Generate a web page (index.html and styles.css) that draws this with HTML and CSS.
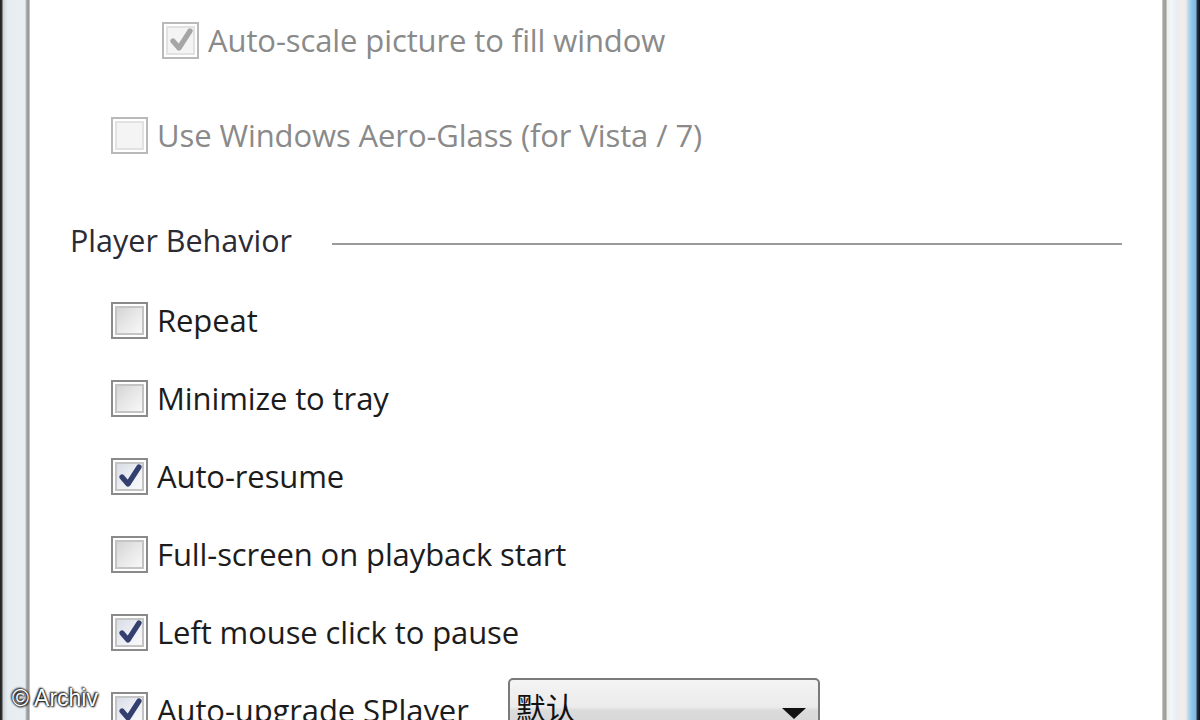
FILE: index.html
```html
<!DOCTYPE html>
<html lang="en">
<head>
  <meta charset="UTF-8">
  <title>SPlayer Options</title>
  <link rel="stylesheet" href="styles.css">
</head>
<body>
  <div id="window">
    <div class="frame-left"></div>
    <div id="panel">
      <div class="row sub disabled">
        <span class="check checked"><svg viewBox="0 0 14 14"><path d="M3 7.5 L6 11 L11.5 2.5"/></svg></span>
        <span class="label">Auto-scale picture to fill window</span>
      </div>
      <div class="row aero disabled">
        <span class="check"></span>
        <span class="label">Use Windows Aero-Glass (for Vista / 7)</span>
      </div>

      <div class="group">
        <span class="group-title">Player Behavior</span>
        <span class="group-line"></span>
      </div>

      <div class="row">
        <span class="check"></span>
        <span class="label">Repeat</span>
      </div>
      <div class="row">
        <span class="check"></span>
        <span class="label">Minimize to tray</span>
      </div>
      <div class="row">
        <span class="check checked"><svg viewBox="0 0 14 14"><path d="M3 7.5 L6 11 L11.5 2.5"/></svg></span>
        <span class="label">Auto-resume</span>
      </div>
      <div class="row">
        <span class="check"></span>
        <span class="label">Full-screen on playback start</span>
      </div>
      <div class="row">
        <span class="check checked"><svg viewBox="0 0 14 14"><path d="M3 7.5 L6 11 L11.5 2.5"/></svg></span>
        <span class="label">Left mouse click to pause</span>
      </div>
      <div class="row">
        <span class="check checked"><svg viewBox="0 0 14 14"><path d="M3 7.5 L6 11 L11.5 2.5"/></svg></span>
        <span class="label">Auto-upgrade SPlayer</span>
        <div class="combo">
          <span class="combo-text">默认</span>
          <span class="combo-arrow"></span>
        </div>
      </div>
    </div>
    <div class="frame-right"></div>
  </div>
  <div id="credit">© Archiv</div>
</body>
</html>
```

FILE: styles.css
```css
html,
body {
  margin: 0;
  padding: 0;
  width: 1200px;
  height: 720px;
  overflow: hidden;
  background-color: #fff;
}
body {
  font-family: "Open Sans", "Noto Sans CJK SC", sans-serif;
  position: relative;
}
#window {
  display: flex;
  height: 720px;
  overflow: hidden;
}
.frame-left {
  width: 30px;
  flex: none;
  background: linear-gradient(to right,
    #1c1c1c 0, #3a3a3a 2px, #c9d0d5 3px, #dfe5e9 6px, #e8edf1 8px,
    #e9eef2 25px, #bfc2c4 26px, #9c9c9c 27px, #9a9a9a 29px, #e6e6e6 30px);
}
.frame-right {
  width: 38px;
  flex: none;
  background: linear-gradient(to right,
    #e4e2dc 0, #a8a6a2 1px, #9b9b9b 4px, #eceeea 5px, #f4f6f8 9px,
    #e8eef4 14px, #f3ece9 20px, #f0ebea 24px, #b9daf0 26px, #8fc6ea 30px,
    #7fb8e0 34px, #2a3a48 35px, #0e0e0e 38px);
}
#panel {
  flex: 1;
  display: flex;
  flex-direction: column;
  padding-top: 1px;
  overflow: hidden;
}
.row {
  display: flex;
  align-items: center;
  height: 78px;
  flex: none;
  padding-left: 81px;
  color: #1c1c1c;
  font-size: 31px;
}
.row.sub {
  padding-left: 132px;
}
.row.aero {
  margin-top: 17px;
}
.row.disabled {
  color: #8a8a8a;
}
.label {
  margin-left: 9px;
  white-space: nowrap;
  letter-spacing: -0.1px;
}
.check {
  width: 37px;
  height: 37px;
  flex: none;
  box-sizing: border-box;
  border: 2px solid #8a8a8a;
  padding: 2px;
  background-color: #fff;
  position: relative;
}
.check::before {
  content: "";
  display: block;
  width: 100%;
  height: 100%;
  box-sizing: border-box;
  border: 2px solid #c4c4c4;
  background: linear-gradient(135deg, #d4d4d4 0%, #e6e6e6 45%, #f8f8f8 100%);
}
.check.checked::before {
  background: linear-gradient(135deg, #d8dce6 0%, #eceef4 50%, #fafafa 100%);
}
.check svg {
  position: absolute;
  left: 3px;
  top: 2px;
  width: 28px;
  height: 28px;
}
.check svg path {
  fill: none;
  stroke: #333f6e;
  stroke-width: 2.6;
  stroke-linecap: round;
  stroke-linejoin: round;
}
.disabled .check {
  border-color: #b9b9b9;
}
.disabled .check::before {
  border-color: #e2e2e2;
  background: #f4f4f4;
}
.disabled .check svg path {
  stroke: #a6a6a6;
}
.group {
  display: flex;
  align-items: center;
  height: 40px;
  margin-top: 46px;
  margin-bottom: 21px;
  padding-left: 40px;
  padding-right: 40px;
}
.group-title {
  font-size: 30.5px;
  color: #2b2b36;
  white-space: nowrap;
}
.group-line {
  flex: 1;
  height: 2px;
  margin-left: 40px;
  margin-top: 8px;
  background-color: #9a9a9a;
}
.combo {
  width: 312px;
  height: 64px;
  margin-left: 39px;
  flex: none;
  box-sizing: border-box;
  border: 2px solid #7a7a7a;
  border-radius: 5px;
  background: linear-gradient(to bottom, #f4f4f4 0, #ebebeb 45%, #dcdcdc 50%, #cfcfcf 100%);
  display: flex;
  align-items: flex-start;
  padding: 6px 12px 0 6px;
}
.combo-text {
  flex: 1;
  font-family: "Noto Sans CJK SC", sans-serif;
  font-size: 30px;
  line-height: 40px;
  color: #111;
}
.combo-arrow {
  width: 0;
  height: 0;
  margin-top: 22px;
  border-left: 12px solid transparent;
  border-right: 12px solid transparent;
  border-top: 11px solid #111;
}
#credit {
  position: absolute;
  left: 12px;
  top: 685px;
  font-family: "Liberation Sans", Arial, sans-serif;
  font-size: 23px;
  color: #fff;
  text-shadow: 0 0 2px #000, 1px 1px 2px #000, -1px -1px 2px #000;
}
```
